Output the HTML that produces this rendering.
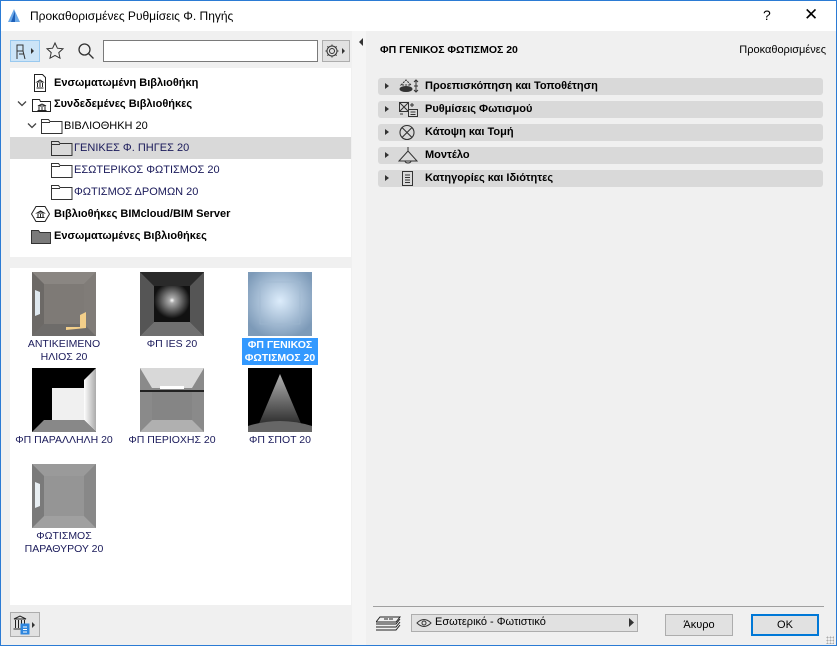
<!DOCTYPE html>
<html><head><meta charset="utf-8"><style>
*{box-sizing:border-box;margin:0;padding:0}
body{width:837px;height:646px;overflow:hidden;background:#f0f0f0;font-family:"Liberation Sans","DejaVu Sans",sans-serif;font-size:11px;color:#000;position:relative}
.a{position:absolute}
.win{left:0;top:0;width:837px;height:646px;border:1px solid #2b7bd4;border-top:1px solid #2b7bd4}
.title{left:1px;top:1px;width:835px;height:30px;background:#fff}
.tree{left:10px;top:68px;width:341px;height:189px;background:#fff}
.thumbs{left:10px;top:268px;width:341px;height:337px;background:#fff}
.ti{position:absolute;left:0;width:341px;height:22px;line-height:22px;font-size:11px}
.b{font-weight:bold}
.fold{position:absolute;width:19px;height:14px;border:1px solid #444;border-radius:1px}
.thumb{position:absolute;width:64px;height:64px}
.lbl{position:absolute;width:108px;text-align:center;font-size:10.5px;line-height:13px;color:#1a1a5a}
.row{position:absolute;left:378px;width:445px;height:17px;background:#d9d9d9;border-radius:3px;font-weight:bold;font-size:11px;line-height:17px}
.row .tri{position:absolute;left:7px;top:5px;width:0;height:0;border-left:4px solid #333;border-top:3.5px solid transparent;border-bottom:3.5px solid transparent}
.row span{position:absolute;left:47px}
.row svg{position:absolute;left:20px;top:0}
.btn{position:absolute;height:22px;border:1px solid #adadad;background:#e1e1e1;text-align:center;line-height:20px;font-size:11px}
</style></head><body>
<div class="a win"></div>
<div class="a title"></div>
<svg class="a" style="left:7px;top:8px" width="14" height="15"><path d="M1 14 L7 1 L13 14Z" fill="#6aa8e8"/><path d="M4 14 L8 3 L8 14Z" fill="#1d5fb8"/></svg>
<div class="a" style="left:30px;top:9px;font-size:12px">Προκαθορισμένες Ρυθμίσεις Φ. Πηγής</div>
<div class="a" style="left:763px;top:7px;font-size:14px">?</div>
<div class="a" style="left:804px;top:5px;font-size:17px;font-weight:300">✕</div>

<!-- toolbar -->
<div class="a" style="left:10px;top:40px;width:30px;height:22px;background:#cce4f7;border:1px solid #99c9ef"></div>
<svg class="a" style="left:14px;top:43px" width="24" height="17" fill="none" stroke="#333"><path d="M3 2h6v6H3zM3 8v8M9 8l2 8M5 11h5"/><path d="M17 5l3 3-3 3z" fill="#333" stroke="none"/></svg>
<svg class="a" style="left:45px;top:41px" width="20" height="20" fill="none" stroke="#333"><path d="M10 2l2.4 5.2 5.6.6-4.2 3.8 1.2 5.6L10 14.4 5 17.2l1.2-5.6L2 7.8l5.6-.6z"/></svg>
<svg class="a" style="left:77px;top:42px" width="18" height="18" fill="none" stroke="#333" stroke-width="1.3"><circle cx="7.5" cy="7.5" r="5.5"/><path d="M11.5 11.5l5 5"/></svg>
<div class="a" style="left:103px;top:40px;width:215px;height:22px;background:#fff;border:1px solid #7a7a7a"></div>
<div class="a" style="left:322px;top:40px;width:28px;height:22px;background:#e1e1e1;border:1px solid #adadad"></div>
<svg class="a" style="left:324px;top:43px" width="24" height="16" fill="none" stroke="#333"><circle cx="8" cy="8" r="2.5"/><path d="M8 1.5v2M8 12.5v2M1.5 8h2M12.5 8h2M3.4 3.4l1.4 1.4M11.2 11.2l1.4 1.4M3.4 12.6l1.4-1.4M11.2 4.8l1.4-1.4"/><circle cx="8" cy="8" r="5"/><path d="M18 5l3 3-3 3z" fill="#333" stroke="none"/></svg>

<!-- tree -->
<div class="a tree">
 <div class="ti b" style="top:4px;padding-left:44px">Ενσωματωμένη Βιβλιοθήκη</div>
 <svg class="a" style="left:23px;top:6px" width="14" height="18" fill="none" stroke="#222"><path d="M1.5 .5h8l3 3v14h-11z"/><path d="M4 8l3-2 3 2zM4.5 9v4M7 9v4M9.5 9v4M3.5 14h7"/></svg>
 <div class="ti b" style="top:25px;padding-left:44px">Συνδεδεμένες Βιβλιοθήκες</div>
 <svg class="a" style="left:7px;top:32px" width="10" height="8" fill="none" stroke="#444" stroke-width="1.3"><path d="M1 1.5l4 4 4-4"/></svg>
 <svg class="a" style="left:22px;top:29px" width="20" height="15" fill="none" stroke="#222"><path d="M.5 2.5h7l1 2h10v10H.5z"/><path d="M6 9l4-2 4 2zM7 10v3M10 10v3M13 10v3M5.5 13.5h9"/></svg>
 <div class="ti" style="top:47px;padding-left:54px">ΒΙΒΛΙΟΘΗΚΗ 20</div>
 <svg class="a" style="left:17px;top:54px" width="10" height="8" fill="none" stroke="#444" stroke-width="1.3"><path d="M1 1.5l4 4 4-4"/></svg>
 <svg class="a" style="left:31px;top:50px" width="22" height="16" fill="none" stroke="#333"><path d="M.5 1.5h7l1.5 2h12v12H.5zM.5 4.5h8.5"/></svg>
 <div class="ti" style="top:69px;background:#d9d9d9;padding-left:64px;color:#1a1a5a">ΓΕΝΙΚΕΣ Φ. ΠΗΓΕΣ 20</div>
 <svg class="a" style="left:41px;top:72px" width="22" height="16" fill="none" stroke="#333"><path d="M.5 1.5h7l1.5 2h12v12H.5zM.5 4.5h8.5"/></svg>
 <div class="ti" style="top:91px;padding-left:64px;color:#1a1a5a">ΕΣΩΤΕΡΙΚΟΣ ΦΩΤΙΣΜΟΣ 20</div>
 <svg class="a" style="left:41px;top:94px" width="22" height="16" fill="none" stroke="#333"><path d="M.5 1.5h7l1.5 2h12v12H.5zM.5 4.5h8.5"/></svg>
 <div class="ti" style="top:113px;padding-left:64px;color:#1a1a5a">ΦΩΤΙΣΜΟΣ ΔΡΟΜΩΝ 20</div>
 <svg class="a" style="left:41px;top:116px" width="22" height="16" fill="none" stroke="#333"><path d="M.5 1.5h7l1.5 2h12v12H.5zM.5 4.5h8.5"/></svg>
 <div class="ti b" style="top:135px;padding-left:44px">Βιβλιοθήκες BIMcloud/BIM Server</div>
 <svg class="a" style="left:21px;top:138px" width="19" height="16" fill="none" stroke="#222"><path d="M5 .5h9l4.5 7.5-4.5 7.5H5L.5 8z"/><path d="M6 7l3.5-2 3.5 2zM7 8v3M9.5 8v3M12 8v3M5.5 11.5h8"/></svg>
 <div class="ti b" style="top:157px;padding-left:44px">Ενσωματωμένες Βιβλιοθήκες</div>
 <svg class="a" style="left:21px;top:161px" width="20" height="15"><path d="M.5 1.5h7l1.5 2h10.5v11H.5z" fill="#7a7a7a" stroke="#333"/></svg>
</div>

<!-- thumbnails -->
<div class="a thumbs"></div>
<svg class="a thumb" style="left:32px;top:272px" viewBox="0 0 64 64"><rect width="64" height="64" fill="#7a7672"/><path d="M0 0h64L52 12H12z" fill="#8a8682"/><path d="M0 64h64L52 52H12z" fill="#6e6c6a"/><path d="M0 0L12 12v40L0 64z" fill="#6c6966"/><path d="M64 0L52 12v40l12 12z" fill="#807c78"/><rect x="12" y="12" width="40" height="40" fill="#7e7a76"/><path d="M3 18l5 2v22l-5 2z" fill="#dfe8ef"/><path d="M34 58l20-2V40l-6 3v12H34z" fill="#f3cf8a"/></svg>
<svg class="a thumb" style="left:140px;top:272px" viewBox="0 0 64 64"><defs><radialGradient id="g1" cx=".5" cy=".4" r=".5"><stop offset="0" stop-color="#fff"/><stop offset=".15" stop-color="#aaa"/><stop offset="1" stop-color="#111"/></radialGradient></defs><rect width="64" height="64" fill="#3a3a3a"/><path d="M0 64h64L50 50H14z" fill="#707070"/><path d="M0 0L14 14v36L0 64z" fill="#555"/><path d="M64 0L50 14v36l14 14z" fill="#555"/><path d="M0 0h64L50 14H14z" fill="#2a2a2a"/><rect x="14" y="14" width="36" height="36" fill="url(#g1)"/></svg>
<svg class="a thumb" style="left:248px;top:272px" viewBox="0 0 64 64"><defs><radialGradient id="g2" cx=".5" cy=".45" r=".6"><stop offset="0" stop-color="#dcecfb"/><stop offset="1" stop-color="#7d9ab8"/></radialGradient></defs><rect width="64" height="64" fill="url(#g2)"/><rect x="12" y="10" width="40" height="42" fill="none" stroke="#9fb7cf" stroke-width=".6"/></svg>
<div class="a lbl" style="left:10px;top:338px">ΑΝΤΙΚΕΙΜΕΝΟ<br>ΗΛΙΟΣ 20</div>
<div class="a lbl" style="left:118px;top:338px">ΦΠ IES 20</div>
<div class="a" style="left:242px;top:338px;width:76px;height:27px;background:#3399ff;color:#fff;font-weight:bold;text-align:center;font-size:10.5px;line-height:13px;padding-top:1px">ΦΠ ΓΕΝΙΚΟΣ<br>ΦΩΤΙΣΜΟΣ 20</div>

<svg class="a thumb" style="left:32px;top:368px" viewBox="0 0 64 64"><defs><linearGradient id="g3" x1="0" x2="1"><stop offset="0" stop-color="#fff"/><stop offset="1" stop-color="#aaa"/></linearGradient></defs><rect width="64" height="64" fill="#000"/><path d="M64 0L52 12v40l12 12z" fill="url(#g3)"/><path d="M12 52h40l12 12H0z" fill="#888"/><rect x="20" y="20" width="32" height="32" fill="#f0f0f0"/></svg>
<svg class="a thumb" style="left:140px;top:368px" viewBox="0 0 64 64"><rect width="64" height="64" fill="#8a8a8a"/><path d="M0 0h64L52 20H12z" fill="#d8d8d8"/><path d="M0 22h64v2H0z" fill="#222"/><rect x="20" y="18" width="24" height="3" fill="#fff"/><path d="M0 64h64L52 52H12z" fill="#b0b0b0"/><rect x="12" y="24" width="40" height="28" fill="#858585"/></svg>
<svg class="a thumb" style="left:248px;top:368px" viewBox="0 0 64 64"><defs><linearGradient id="g4" x1="0" y1="0" x2="0" y2="1"><stop offset="0" stop-color="#ddd"/><stop offset="1" stop-color="#333"/></linearGradient></defs><rect width="64" height="64" fill="#000"/><path d="M32 6L10 58h44z" fill="url(#g4)" opacity=".8"/><path d="M0 58Q32 48 64 58v6H0z" fill="#666"/></svg>
<div class="a lbl" style="left:10px;top:434px;width:108px">ΦΠ ΠΑΡΑΛΛΗΛΗ 20</div>
<div class="a lbl" style="left:118px;top:434px">ΦΠ ΠΕΡΙΟΧΗΣ 20</div>
<div class="a lbl" style="left:226px;top:434px">ΦΠ ΣΠΟΤ 20</div>

<svg class="a thumb" style="left:32px;top:464px" viewBox="0 0 64 64"><rect width="64" height="64" fill="#8c8c8c"/><path d="M0 0h64L52 12H12z" fill="#9a9a9a"/><path d="M0 64h64L52 52H12z" fill="#a0a0a0"/><path d="M0 0L12 12v40L0 64z" fill="#7a7a7a"/><path d="M64 0L52 12v40l12 12z" fill="#888"/><rect x="12" y="12" width="40" height="40" fill="#959595"/><path d="M3 18l5 2v22l-5 2z" fill="#e8eef2"/></svg>
<div class="a lbl" style="left:10px;top:530px">ΦΩΤΙΣΜΟΣ<br>ΠΑΡΑΘΥΡΟΥ 20</div>

<!-- bottom left button -->
<div class="a" style="left:10px;top:612px;width:30px;height:25px;border:1px solid #adadad;background:#e1e1e1"></div>
<svg class="a" style="left:12px;top:614px" width="26" height="22" fill="none" stroke="#222"><path d="M2 5l6-3 6 3zM3.5 6v8M6.5 6v8M9.5 6v8M12.5 6v8M1.5 15h13"/><rect x="9" y="10" width="8" height="10" fill="#2e86de" stroke="#2e86de"/><path d="M11 13h4M11 15.5h4M11 18h4" stroke="#fff"/><path d="M20 8l3 3-3 3z" fill="#333" stroke="none"/></svg>

<!-- splitter -->
<div class="a" style="left:352px;top:31px;width:14px;height:614px;background:#f5f5f5"></div>
<svg class="a" style="left:358px;top:38px" width="6" height="8"><path d="M5 0v8L1 4z" fill="#333"/></svg>

<!-- right panel -->
<div class="a b" style="left:380px;top:44px;font-size:10.5px">ΦΠ ΓΕΝΙΚΟΣ ΦΩΤΙΣΜΟΣ 20</div>
<div class="a" style="right:11px;top:44px;font-size:11px">Προκαθορισμένες</div>
<div class="row" style="top:78px"><i class="tri"></i><svg width="24" height="17" fill="none" stroke="#333"><path d="M3 7l5-5 5 5z" stroke-dasharray="2 1"/><ellipse cx="8" cy="11" rx="6" ry="2.5" fill="#333"/><path d="M18 2v12M16 4l2-2 2 2M16 12l2 2 2-2M16 8h4"/></svg><span>Προεπισκόπηση και Τοποθέτηση</span></div>
<div class="row" style="top:101px"><i class="tri"></i><svg width="24" height="17" fill="none" stroke="#333"><rect x="1.5" y="1.5" width="9" height="9"/><path d="M2 2l8 8M10 2L2 10"/><rect x="10.5" y="8.5" width="9" height="7"/><path d="M12.5 11h5M12.5 13.5h5M14 2v4M12 4h4M2 13h3"/></svg><span>Ρυθμίσεις Φωτισμού</span></div>
<div class="row" style="top:124px"><i class="tri"></i><svg width="24" height="17" fill="none" stroke="#333" stroke-width="1.1"><circle cx="9" cy="8.5" r="7"/><path d="M4 3.5l10 10M14 3.5l-10 10"/></svg><span>Κάτοψη και Τομή</span></div>
<div class="row" style="top:147px"><i class="tri"></i><svg width="24" height="17" fill="none" stroke="#333"><path d="M10 0v4M1 14L10 4l9 10zM7 14a3 2 0 0 0 6 0"/></svg><span>Μοντέλο</span></div>
<div class="row" style="top:170px"><i class="tri"></i><svg width="24" height="17" fill="none" stroke="#333"><path d="M4.5 1.5h10v14h-10zM7 5h5M7 7.5h5M7 10h5M7 12.5h5"/></svg><span>Κατηγορίες και Ιδιότητες</span></div>

<!-- footer -->
<div class="a" style="left:373px;top:606px;width:451px;height:1px;background:#a0a0a0"></div>
<svg class="a" style="left:376px;top:614px" width="26" height="20" fill="none" stroke="#222"><path d="M4 3h20l-4 5H0zM0 10h20l4-5M0 13h20l4-5M0 16h20l4-5"/><path d="M8 5l4 0M13 5h4" /></svg>
<div class="a" style="left:411px;top:614px;width:227px;height:18px;border:1px solid #adadad;background:#e1e1e1"></div>
<svg class="a" style="left:416px;top:618px" width="16" height="10" fill="none" stroke="#333"><path d="M1 5Q8-2 15 5Q8 12 1 5z"/><circle cx="8" cy="5" r="2"/></svg>
<div class="a" style="left:435px;top:616px;font-size:11px">Εσωτερικό - Φωτιστικό</div>
<svg class="a" style="left:629px;top:618px" width="5" height="9"><path d="M0 0l5 4.5L0 9z" fill="#333"/></svg>
<div class="btn" style="left:665px;top:614px;width:68px">Άκυρο</div>
<div class="btn" style="left:751px;top:614px;width:68px;border:2px solid #0078d7;line-height:18px">OK</div>
<div class="a" style="left:826px;top:636px;width:8px;height:8px;background:radial-gradient(circle,#aaa 0.8px,transparent 1px) 0 0/3px 3px"></div>
</body></html>
